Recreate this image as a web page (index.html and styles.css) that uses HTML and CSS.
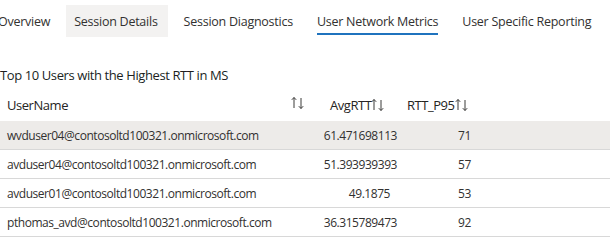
FILE: index.html
```html
<!DOCTYPE html>
<html lang="en">
<head>
  <meta charset="utf-8">
  <title>User Network Metrics</title>
  <link rel="stylesheet" href="styles.css">
</head>
<body>
  <nav class="tabs">
    <div class="tab">Overview</div>
    <div class="tab tab-hover">Session Details</div>
    <div class="tab">Session Diagnostics</div>
    <div class="tab tab-active">User Network Metrics</div>
    <div class="tab">User Specific Reporting</div>
  </nav>

  <main>
    <h2 class="title">Top 10 Users with the Highest RTT in MS</h2>

    <table class="grid">
      <colgroup>
        <col class="col-user">
        <col class="col-avg">
        <col class="col-p95">
      </colgroup>
      <thead>
        <tr>
          <th class="h-user">
            <span>UserName</span>
            <svg class="sort" viewBox="0 0 14 14"><path d="M3 12V1.5M0.8 3.8L3 1.5l2.2 2.3M10 2v10.5M7.8 10.2l2.2 2.3 2.2-2.3"/></svg>
          </th>
          <th class="h-avg">AvgRTT<svg class="sort" viewBox="0 0 14 14"><path d="M3 12V1.5M0.8 3.8L3 1.5l2.2 2.3M10 2v10.5M7.8 10.2l2.2 2.3 2.2-2.3"/></svg></th>
          <th class="h-p95">RTT_P95<svg class="sort" viewBox="0 0 14 14"><path d="M3 12V1.5M0.8 3.8L3 1.5l2.2 2.3M10 2v10.5M7.8 10.2l2.2 2.3 2.2-2.3"/></svg></th>
        </tr>
      </thead>
      <tbody>
        <tr class="selected">
          <td class="user">wvduser04@contosoltd100321.onmicrosoft.com</td>
          <td class="avg">61.471698113</td>
          <td class="p95">71</td>
        </tr>
        <tr>
          <td class="user">avduser04@contosoltd100321.onmicrosoft.com</td>
          <td class="avg">51.393939393</td>
          <td class="p95">57</td>
        </tr>
        <tr>
          <td class="user">avduser01@contosoltd100321.onmicrosoft.com</td>
          <td class="avg avg-short">49.1875</td>
          <td class="p95">53</td>
        </tr>
        <tr>
          <td class="user">pthomas_avd@contosoltd100321.onmicrosoft.com</td>
          <td class="avg">36.315789473</td>
          <td class="p95">92</td>
        </tr>
      </tbody>
    </table>
  </main>
</body>
</html>
```

FILE: styles.css
```css
body {
  margin: 0;
  font-family: 'Open Sans', 'Noto Sans', sans-serif;
  font-size: 12px;
  color: #252423;
  background: #ffffff;
  overflow: hidden;
}

.tabs {
  display: flex;
  gap: 8px;
  margin: 5px 0 0 -10px;
  height: 32px;
}

.tab {
  display: flex;
  align-items: center;
  padding: 0 8px;
  height: 32px;
  font-size: 12.5px;
  letter-spacing: -0.25px;
  color: #323130;
  white-space: nowrap;
  box-sizing: border-box;
}

.tab-hover {
  background: #f3f2f1;
  padding-right: 10px;
}

.tab-active {
  position: relative;
}

.tab-active::after {
  content: "";
  position: absolute;
  left: 8px;
  right: 8px;
  bottom: 2px;
  height: 2px;
  background: #1f73be;
}

.title {
  margin: 29px 0 0;
  font-size: 13px;
  letter-spacing: -0.4px;
  font-weight: 400;
  color: #201f1e;
  line-height: 18px;
}

.grid {
  border-collapse: collapse;
  table-layout: fixed;
  width: 610px;
  margin-top: 4px;
}

.col-user { width: 318px; }
.col-avg { width: 84px; }

.grid th {
  height: 33px;
  font-size: 13px;
  letter-spacing: -0.45px;
  font-weight: 400;
  text-align: left;
  padding: 0;
  white-space: nowrap;
  color: #252423;
}

.h-user {
  padding-left: 7px !important;
  padding-right: 13px !important;
}

.h-user span {
  float: left;
}

.h-user .sort {
  float: right;
}

.h-avg {
  padding-left: 12px !important;
}

.h-p95 {
  padding-left: 5px !important;
}

.sort {
  width: 14px;
  height: 14px;
  vertical-align: -2px;
  fill: none;
  stroke: #3b3a39;
  stroke-width: 1;
}

.grid td {
  height: 28px;
  padding: 0;
  border-bottom: 1px solid #d8d8d8;
  letter-spacing: -0.45px;
  color: #323130;
  white-space: nowrap;
}

.grid tr.selected td {
  background: #edebe9;
}

.user {
  padding-left: 7px !important;
}

.avg {
  text-align: right;
  padding-right: 5px !important;
}

.avg-short {
  padding-right: 12px !important;
}

.p95 {
  padding-left: 56px !important;
}
```
